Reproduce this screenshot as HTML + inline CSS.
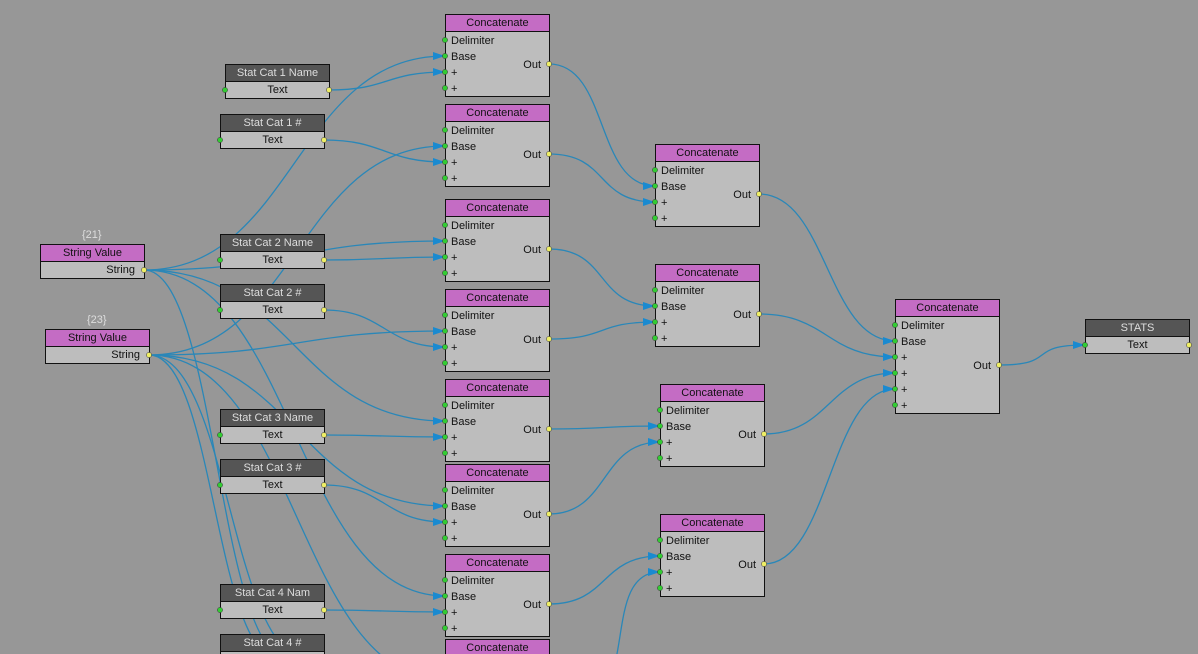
<!DOCTYPE html>
<html><head><meta charset="utf-8"><style>
html,body{margin:0;padding:0;background:#979797;width:1198px;height:654px;overflow:hidden;font-family:"Liberation Sans",sans-serif;}
#c{position:relative;width:1198px;height:654px;overflow:hidden;}
.n{position:absolute;background:#bdbdbd;border:1px solid #111;box-sizing:border-box;font-size:11px;color:#111;}
.h{height:16px;line-height:16px;text-align:center;border-bottom:1px solid #111;background:#c46cc4;color:#111;}
.d .h{background:#555;color:#ddd;}
.r{position:absolute;left:5px;height:14px;line-height:14px;}
.o{position:absolute;right:8px;height:14px;line-height:14px;}
.lab{position:absolute;font-size:11px;color:#ddd;}
svg{position:absolute;left:0;top:0;}
</style></head><body><div id="c">
<svg id="w" width="1198" height="654"></svg>
</div>
<script>
var c=document.getElementById('c'),svg=document.getElementById('w');
var ns='http://www.w3.org/2000/svg';
var dots=[];
function concat(x,y,extra){var rows=['Delimiter','Base','+','+'];for(var i=0;i<(extra||0);i++)rows.push('+');
 var h=17+rows.length*16+2;var d=document.createElement('div');d.className='n';d.style.cssText='left:'+x+'px;top:'+y+'px;width:105px;height:'+h+'px';
 var s='<div class="h">Concatenate</div>';rows.forEach(function(r,i){s+='<div class="r" style="top:'+(19+i*16)+'px">'+r+'</div>';dots.push([x,y+26+i*16,'#3c3']);});
 var oy=rows.length==4?50:66;s+='<div class="o" style="top:'+(oy-7)+'px">Out</div>';dots.push([x+104,y+oy,'#ee6']);
 d.innerHTML=s;c.appendChild(d);}
function stat(x,y,t,row,pink){var d=document.createElement('div');d.className='n'+(pink?'':' d');d.style.cssText='left:'+x+'px;top:'+y+'px;width:105px;height:35px';
 d.innerHTML='<div class="h">'+t+'</div><div style="position:absolute;top:18px;left:0;right:0;height:15px;line-height:15px;text-align:'+(pink?'right;padding-right:9px':'center')+'">'+row+'</div>';
 c.appendChild(d);if(!pink)dots.push([x,y+26,'#3c3']);dots.push([x+104,y+26,'#ee6']);}
var C=[[445,14],[445,104],[445,199],[445,289],[445,379],[445,464],[445,554],[445,639],[655,144],[655,264],[660,384],[660,514]];
var W=[];
function out(i){return [C[i][0]+104,C[i][1]+50];}
function inp(i,k){return [C[i][0],C[i][1]+26+k*16];}
var S1=[144,270],S2=[149,355];
W.push([S1,inp(0,1)],[[329,90],inp(0,2)],[S2,inp(1,1)],[[324,140],inp(1,2)],
[S1,inp(2,1)],[[324,260],inp(2,2)],[S2,inp(3,1)],[[324,310],inp(3,2)],
[S1,inp(4,1)],[[324,435],inp(4,2)],[S2,inp(5,1)],[[324,485],inp(5,2)],[S1,inp(6,1)],[[324,610],inp(6,2)],[S2,[445,680]],
[out(0),inp(8,1)],[out(1),inp(8,2)],[out(2),inp(9,1)],[out(3),inp(9,2)],[out(4),inp(10,1)],[out(5),inp(10,2)],[out(6),inp(11,1)],[[580,700],inp(11,2)],
[out(8),[895,341]],[out(9),[895,357]],[out(10),[895,373]],[out(11),[895,389]],[[999,365],[1085,345]],
[S1,[290,660]],[S2,[310,660]],[S2,[280,660]]);
var g='';
W.forEach(function(w){var a=w[0],b=w[1];var dx=Math.max(60,Math.abs(b[0]-a[0])*0.5);
 g+='<path d="M'+a[0]+' '+a[1]+'C'+(a[0]+dx)+' '+a[1]+' '+(b[0]-dx)+' '+b[1]+' '+b[0]+' '+b[1]+'" fill="none" stroke="#2a87b8" stroke-width="1.3"/>';
 if(b[1]<654&&b[0]<1100||b[0]==1085) g+='<path d="M'+(b[0]-12)+' '+(b[1]-4)+'L'+b[0]+' '+b[1]+'L'+(b[0]-12)+' '+(b[1]+4)+'Z" fill="#1a8ad0"/>';});
svg.innerHTML=g;
C.forEach(function(p){concat(p[0],p[1]);});
concat(895,299,2);
stat(225,64,'Stat Cat 1 Name','Text');stat(220,114,'Stat Cat 1 #','Text');stat(220,234,'Stat Cat 2 Name','Text');stat(220,284,'Stat Cat 2 #','Text');
stat(220,409,'Stat Cat 3 Name','Text');stat(220,459,'Stat Cat 3 #','Text');stat(220,584,'Stat Cat 4 Nam','Text');stat(220,634,'Stat Cat 4 #','Text');
stat(40,244,'String Value','String',1);stat(45,329,'String Value','String',1);stat(1085,319,'STATS','Text');
var l=document.createElement('div');l.className='lab';l.style.cssText='left:82px;top:229px';l.textContent='{21}';c.appendChild(l);
l=document.createElement('div');l.className='lab';l.style.cssText='left:87px;top:314px';l.textContent='{23}';c.appendChild(l);
var s2=document.createElementNS(ns,'svg');s2.setAttribute('width','1198');s2.setAttribute('height','654');s2.style.zIndex=5;
var h='';dots.forEach(function(d){h+='<circle cx="'+d[0]+'" cy="'+d[1]+'" r="2.6" fill="'+d[2]+'" stroke="#333" stroke-width="0.5"/>';});
s2.innerHTML=h;c.appendChild(s2);
</script></body></html>
